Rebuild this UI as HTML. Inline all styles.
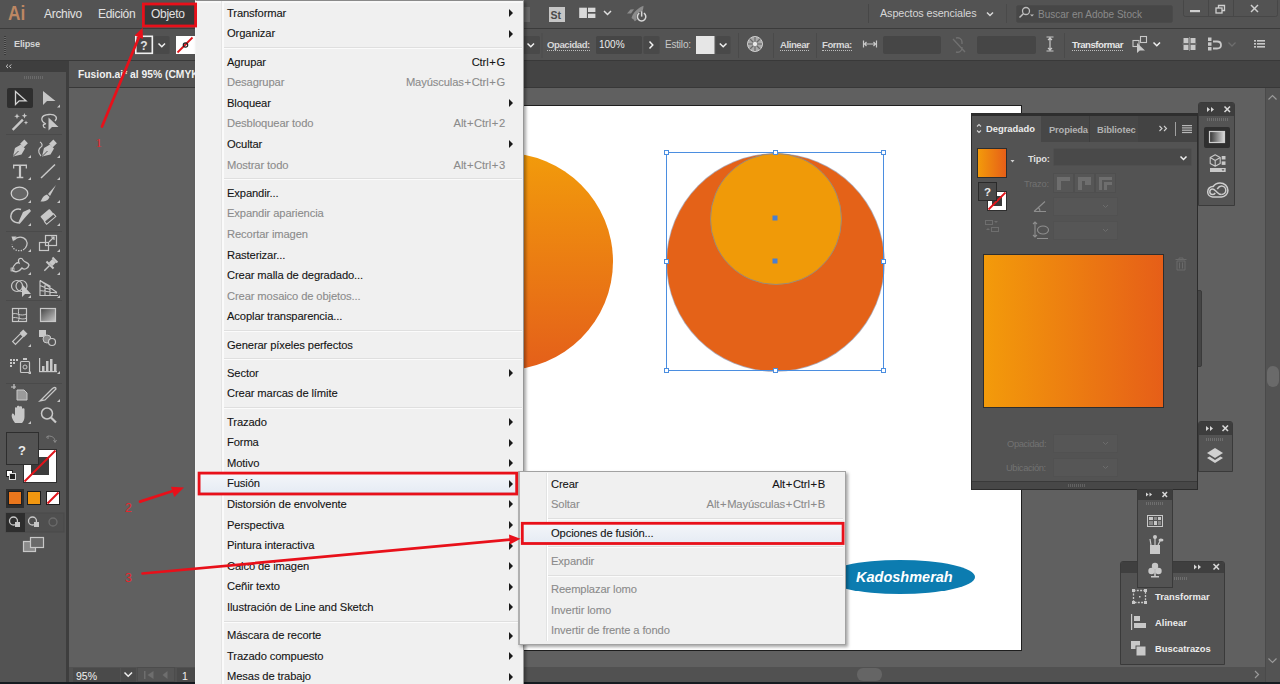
<!DOCTYPE html>
<html><head><meta charset="utf-8">
<style>
*{margin:0;padding:0;box-sizing:border-box}
html,body{width:1280px;height:684px;overflow:hidden;background:#606060;font-family:"Liberation Sans",sans-serif}
.a{position:absolute}
.t{position:absolute;white-space:nowrap;line-height:1}
svg{position:absolute;left:0;top:0;overflow:visible}
.fld{position:absolute;background:#464646;border-radius:2px}
.ul{border-bottom:1px dotted #bdbdbd;padding-bottom:1px}
.mi{position:absolute;left:227px;font-size:11px;color:#111;white-space:nowrap;line-height:1}
.arr{position:absolute;width:0;height:0;border-top:4px solid transparent;border-bottom:4px solid transparent;border-left:4.5px solid #1a1a1a}
.m{-webkit-text-stroke:0.1px currentColor;letter-spacing:-0.12px}
.sep{position:absolute;height:2px;border-top:1px solid #dfdfdf;border-bottom:1px solid #fbfbfb}
.ph{position:absolute;background:#3d3d3d}
</style></head><body>

<!-- canvas -->
<div class="a" style="left:69px;top:88px;width:1196px;height:579px;background:#606060"></div>
<!-- tab bar -->
<div class="a" style="left:66px;top:60px;width:1214px;height:28px;background:#444444;border-bottom:1px solid #383838"></div>
<div class="a" style="left:69px;top:61px;width:440px;height:26px;background:#535353"></div>
<div class="t" style="left:78px;top:70.28px;font-size:10.3px;color:#f0f0f0;font-weight:bold;">Fusion.ai* al 95% (CMYK/Vista previa)</div>


<!-- artboard -->
<div class="a" style="left:500px;top:105px;width:522px;height:546px;background:#fff;border:1px solid #1e1e1e"></div>

<!-- left circle gradient -->
<div class="a" style="left:395px;top:153px;width:218px;height:217px;border-radius:50%;background:linear-gradient(#f29b0b,#e45f1a)"></div>
<!-- right circle -->
<div class="a" style="left:667px;top:153.5px;width:217px;height:217px;border-radius:50%;background:#e46218;box-shadow:0 0 0 0.8px rgba(105,100,125,.55)"></div>
<div class="a" style="left:710px;top:153px;width:132px;height:132px;border-radius:50%;background:#f09a08;border:1px solid #9b8a78"></div>
<!-- selection box -->
<svg width="1280" height="684" viewBox="0 0 1280 684">
 <g fill="none" stroke="#4b8ee0" stroke-width="1">
  <rect x="666.5" y="152.5" width="217" height="218"/>
 </g>
 <g fill="#fff" stroke="#4b8ee0" stroke-width="1">
  <rect x="664.5" y="150.5" width="4" height="4"/><rect x="773.5" y="150.5" width="4" height="4"/><rect x="881.5" y="150.5" width="4" height="4"/>
  <rect x="664.5" y="259.5" width="4" height="4"/><rect x="881.5" y="259.5" width="4" height="4"/>
  <rect x="664.5" y="368.5" width="4" height="4"/><rect x="773.5" y="368.5" width="4" height="4"/><rect x="881.5" y="368.5" width="4" height="4"/>
 </g>
 <rect x="772.5" y="215.5" width="5" height="5" fill="#4a7fd0"/>
 <rect x="772.5" y="258.5" width="5" height="5" fill="#4a7fd0"/>
</svg>

<!-- Kadoshmerah -->
<div class="a" style="left:825px;top:560px;width:150px;height:34px;border-radius:50%;background:#0c7cb0"></div>
<div class="t" style="left:856px;top:569.73px;font-size:14.5px;color:#ffffff;font-weight:bold;font-style:italic;">Kadoshmerah</div>


<!-- menubar -->
<div class="a" style="left:0;top:0;width:1280px;height:29px;background:#535353;border-bottom:1px solid #3b3b3b"></div>
<div class="a" style="left:144px;top:3px;width:51px;height:23px;background:#383838"></div>
<svg width="1280" height="684" viewBox="0 0 1280 684">
 <rect x="524" y="7" width="6" height="15" fill="#686868"/>
 <rect x="549" y="7" width="16" height="15" fill="#c6c6c6"/>
 <text x="550.5" y="19" font-family="Liberation Sans" font-size="10.5" font-weight="bold" fill="#4a4a4a">St</text>
 <g fill="#dadada"><rect x="579.2" y="7.7" width="7.7" height="10.3"/><rect x="588" y="7.7" width="7.4" height="4.3"/><rect x="588" y="13.7" width="7.4" height="4.3"/></g>
 <polyline points="604,11 607.5,14.5 611,11" fill="none" stroke="#e0e0e0" stroke-width="1.5"/>
 <g fill="#8c8c8c"><path d="M631.5,18 C633,13 637,8.5 643.5,5.8 C643.5,11 640,16.5 635.5,21 Z"/><path d="M627,13.5 L630.5,9.5 L634,9.3 L631,13.5 Z"/><path d="M634,21.5 L634.5,17 L637,18 Z"/></g>
 <circle cx="641.6" cy="17" r="5.4" fill="#535353"/>
 <path d="M639.3,13.2 A4.2,4.2 0 1 0 643.9,13.2" fill="none" stroke="#d8d8d8" stroke-width="1.5"/>
 <rect x="640.9" y="11.3" width="1.5" height="5.3" fill="#d8d8d8"/>
 <rect x="868" y="4" width="1" height="19" fill="#474747"/>
 <polyline points="987,12.5 990,15.5 993,12.5" fill="none" stroke="#d8d8d8" stroke-width="1.5"/>
 <rect x="1006" y="4" width="1" height="19" fill="#4a4a4a"/>
 <rect x="1016.5" y="5.5" width="156" height="17" rx="2" fill="#474747" stroke="#4a4a4a"/>
 <circle cx="1026" cy="11" r="3.5" fill="none" stroke="#bdbdbd" stroke-width="1.3"/>
 <line x1="1023.3" y1="13.7" x2="1019.5" y2="17.5" stroke="#bdbdbd" stroke-width="1.5"/>
 <path d="M1030,14.5 h4 l-2,2 Z" fill="#bdbdbd"/>
 <rect x="1183.5" y="-1.5" width="94" height="18" rx="2" fill="none" stroke="#474747"/>
 <rect x="1208" y="0" width="1" height="16" fill="#474747"/>
 <rect x="1233" y="0" width="1" height="16" fill="#474747"/>
 <rect x="1190" y="10" width="10" height="2.2" fill="#cfcfcf"/>
 <g fill="none" stroke="#cfcfcf" stroke-width="1.3"><rect x="1216" y="8" width="6" height="5"/><path d="M1218.5,8 v-2.5 h6 v5 h-2.5"/></g>
 <g stroke="#cfcfcf" stroke-width="1.5"><line x1="1251" y1="5" x2="1258" y2="12"/><line x1="1258" y1="5" x2="1251" y2="12"/></g>
</svg>
<div class="t" style="left:7.5px;top:3.37px;font-size:20px;color:#bd8763;font-weight:bold;transform:scaleX(0.86);transform-origin:0 0;">Ai</div>
<div class="t" style="left:44px;top:8.44px;font-size:12px;color:#e2e2e2;letter-spacing:-0.3px;">Archivo</div>
<div class="t" style="left:98px;top:8.44px;font-size:12px;color:#e2e2e2;letter-spacing:-0.3px;">Edición</div>
<div class="t" style="left:151px;top:8.44px;font-size:12px;color:#e2e2e2;letter-spacing:-0.3px;">Objeto</div>
<div class="t" style="left:880px;top:8.06px;font-size:10.8px;color:#d6d6d6;letter-spacing:-0.1px;">Aspectos esenciales</div>
<div class="t" style="left:1038px;top:9.54px;font-size:10px;color:#8a8a8a;">Buscar en Adobe Stock</div>


<!-- control bar -->
<div class="a" style="left:0;top:29px;width:1280px;height:32px;background:#535353;border-bottom:1px solid #393939"></div>
<svg width="1280" height="684" viewBox="0 0 1280 684">
 <g fill="#3a3a3a"><rect x="4" y="36" width="2" height="19"/></g>
 <g fill="#6a6a6a"><rect x="4" y="37" width="2" height="1"/><rect x="4" y="39" width="2" height="1"/><rect x="4" y="41" width="2" height="1"/><rect x="4" y="43" width="2" height="1"/><rect x="4" y="45" width="2" height="1"/><rect x="4" y="47" width="2" height="1"/><rect x="4" y="49" width="2" height="1"/><rect x="4" y="51" width="2" height="1"/><rect x="4" y="53" width="2" height="1"/></g>
 <!-- fill ? -->
 <rect x="135.8" y="36.3" width="16.5" height="17" fill="#474747" stroke="#f0f0f0" stroke-width="1.6"/>
 <text x="140.2" y="50" font-family="Liberation Sans" font-size="12" font-weight="bold" fill="#e0e0e0">?</text>
 <rect x="154" y="36" width="15.5" height="18" rx="1.5" fill="#494949"/>
 <polyline points="158.5,43.5 161.8,46.8 165,43.5" fill="none" stroke="#f0f0f0" stroke-width="1.5"/>
 <rect x="176" y="36" width="19" height="18" fill="#fff"/>
 <line x1="177.5" y1="52.5" x2="192.5" y2="37.5" stroke="#e0141a" stroke-width="1.8"/>
 <circle cx="185.5" cy="45" r="2.2" fill="none" stroke="#222" stroke-width="1.2"/>
 <!-- dropdown near menu -->
 <rect x="520" y="36" width="20" height="18" rx="1.5" fill="#494949"/>
 <polyline points="527.5,43.5 530.8,46.8 534,43.5" fill="none" stroke="#f0f0f0" stroke-width="1.5"/>
 <rect x="541.5" y="33" width="1" height="25" fill="#4c4c4c"/>
 <rect x="596" y="36" width="46" height="18" rx="1.5" fill="#464646"/>
 <rect x="643.5" y="36" width="16" height="18" rx="1.5" fill="#494949"/>
 <polyline points="649.5,41.5 652.8,45 649.5,48.5" fill="none" stroke="#f0f0f0" stroke-width="1.5"/>
 <rect x="696" y="36" width="18.5" height="18" fill="#e6e6e6"/>
 <rect x="716" y="36" width="14.5" height="18" rx="1.5" fill="#494949"/>
 <polyline points="719.8,43.5 723.2,46.8 726.5,43.5" fill="none" stroke="#f0f0f0" stroke-width="1.5"/>
 <rect x="738" y="33" width="1" height="25" fill="#4a4a4a"/>
 <!-- globe -->
 <circle cx="755" cy="44" r="7.5" fill="#a8a8a8" stroke="#cfcfcf" stroke-width="1"/>
 <g stroke="#6a6a6a" stroke-width="1.2"><line x1="755" y1="37" x2="755" y2="51"/><line x1="748" y1="44" x2="762" y2="44"/><line x1="750" y1="39" x2="760" y2="49"/><line x1="760" y1="39" x2="750" y2="49"/></g>
 <circle cx="755" cy="44" r="2.2" fill="#e8e8e8"/>
 <rect x="773" y="33" width="1" height="25" fill="#4a4a4a"/>
 <rect x="816" y="33" width="1" height="25" fill="#4a4a4a"/>
 <!-- width icon -->
 <g stroke="#c8c8c8" stroke-width="1.2" fill="none"><path d="M863.5,40.5 v7 M876.5,40.5 v7 M864,44 h12 M866.5,42 l-2,2 l2,2 M873.5,42 l2,2 l-2,2"/></g>
 <rect x="883" y="36" width="58" height="18" rx="2" fill="#464646"/>
 <!-- link -->
 <g stroke="#707070" stroke-width="1.4" fill="none"><path d="M956,38 c3,-1 6,1 6,4 v2 M956,52 c3,1 6,-1 6,-4 v-1 M953,39 l12,13"/></g>
 <rect x="977" y="36" width="59" height="18" rx="2" fill="#464646"/>
 <!-- height icon -->
 <g stroke="#c8c8c8" stroke-width="1.2" fill="none"><path d="M1046.5,37 h7 M1046.5,51 h7 M1050,37.5 v13 M1048,40 l2,-2 l2,2 M1048,48 l2,2 l2,-2"/></g>
 <rect x="1064" y="33" width="1" height="25" fill="#4a4a4a"/>
 <!-- transform icon -->
 <g fill="none" stroke="#c8c8c8" stroke-width="1.1"><rect x="1133" y="40.5" width="6" height="6"/><rect x="1140.5" y="36.5" width="6" height="6"/></g>
 <path d="M1137,43 L1137,53 L1139.8,50.5 L1145,50.5 Z" fill="#c8c8c8"/>
 <polyline points="1153.5,42.5 1156.8,45.8 1160,42.5" fill="none" stroke="#f0f0f0" stroke-width="1.5"/>
 <!-- grid -->
 <g fill="#c8c8c8"><rect x="1183.5" y="38" width="5" height="5"/><rect x="1190.5" y="38" width="5" height="5"/><rect x="1183.5" y="45" width="5" height="5"/><rect x="1190.5" y="45" width="5" height="5"/></g>
 <g fill="#8a8a8a"><rect x="1189" y="37" width="1" height="14"/><rect x="1182.5" y="43.5" width="14" height="1"/></g>
 <!-- align -->
 <g fill="#c8c8c8"><rect x="1208" y="37.5" width="3.5" height="3.5"/><rect x="1208" y="42.3" width="3.5" height="3.5"/><rect x="1208" y="47" width="3.5" height="3.5"/></g>
 <path d="M1213,41.5 h4 c3,0 4,1.5 4,3.5 c0,2 -1,3.5 -4,3.5 h-4" fill="none" stroke="#c8c8c8" stroke-width="1.8"/>
 <polyline points="1228.5,42.5 1232,46 1235.5,42.5" fill="none" stroke="#6e6e6e" stroke-width="1.3"/>
 <!-- list -->
 <g fill="#c8c8c8"><rect x="1254" y="40" width="2" height="1.6"/><rect x="1257" y="40" width="8" height="1.6"/><rect x="1254" y="43" width="2" height="1.6"/><rect x="1257" y="43" width="8" height="1.6"/><rect x="1254" y="46" width="2" height="1.6"/><rect x="1257" y="46" width="8" height="1.6"/></g>
</svg>
<div class="t" style="left:14px;top:39.71px;font-size:9.2px;color:#d4d4d4;font-weight:bold;letter-spacing:-0.2px;">Elipse</div>
<div class="t ul" style="left:547px;top:39.87px;font-size:9.6px;color:#d8d8d8;font-weight:bold;letter-spacing:-0.45px;">Opacidad:</div>
<div class="t" style="left:599px;top:39.53px;font-size:10px;color:#ececec;">100%</div>
<div class="t" style="left:665px;top:39.53px;font-size:10px;color:#c8c8c8;letter-spacing:-0.2px;">Estilo:</div>
<div class="t ul" style="left:780px;top:39.87px;font-size:9.6px;color:#d8d8d8;font-weight:bold;letter-spacing:-0.45px;">Alinear</div>
<div class="t ul" style="left:822px;top:39.87px;font-size:9.6px;color:#d8d8d8;font-weight:bold;letter-spacing:-0.45px;">Forma:</div>
<div class="t ul" style="left:1072px;top:39.87px;font-size:9.6px;color:#e6e6e6;font-weight:bold;letter-spacing:-0.45px;">Transformar</div>


<!-- tools panel -->
<div class="a" style="left:0;top:61px;width:69px;height:623px;background:#3e3e3e"></div>
<div class="a" style="left:0;top:72px;width:66px;height:612px;background:#535353"></div>
<svg width="1280" height="684" viewBox="0 0 1280 684">
 <!-- header chevrons -->
 <g fill="none" stroke="#d0d0d0" stroke-width="1">
  <polyline points="8,64.5 6.2,66.3 8,68.1"/><polyline points="11.2,64.5 9.4,66.3 11.2,68.1"/>
 </g>
 <!-- grip -->
 <g fill="#6a6a6a"><rect x="24" y="76" width="19" height="3"/></g>
 <g fill="#535353"><rect x="25" y="76" width="1" height="3"/><rect x="27" y="76" width="1" height="3"/><rect x="29" y="76" width="1" height="3"/><rect x="31" y="76" width="1" height="3"/><rect x="33" y="76" width="1" height="3"/><rect x="35" y="76" width="1" height="3"/><rect x="37" y="76" width="1" height="3"/><rect x="39" y="76" width="1" height="3"/><rect x="41" y="76" width="1" height="3"/></g>
 <!-- separators -->
 <g fill="#4a4a4a"><rect x="6" y="134" width="56" height="1"/><rect x="6" y="231" width="56" height="1"/><rect x="6" y="300" width="56" height="1"/><rect x="6" y="383" width="56" height="1"/></g>
 <!-- selected bg -->
 <rect x="7" y="88" width="26" height="20" rx="2" fill="#2e2e2e"/>
 <g fill="none" stroke="#d4d4d4" stroke-width="1.3" stroke-linejoin="miter">
  <!-- selection arrow outline -->
  <path d="M15.5,91.5 L15.5,104.5 L19.2,100.8 L26,100.8 Z"/>
 </g>
 <g fill="#c6c6c6">
  <!-- direct selection -->
  <path d="M43,91 L43,105 L47,101 L55.5,101 Z"/>
  <!-- corner triangles -->
  <path d="M60,104.5 L60,107.5 L57,107.5 Z"/>
  <path d="M31,155 L31,158 L28,158 Z"/><path d="M60,155 L60,158 L57,158 Z"/>
  <path d="M31,177 L31,180 L28,180 Z"/><path d="M60,177 L60,180 L57,180 Z"/>
  <path d="M31,200 L31,203 L28,203 Z"/><path d="M60,200 L60,203 L57,203 Z"/>
  <path d="M31,223 L31,226 L28,226 Z"/><path d="M60,223 L60,226 L57,226 Z"/>
  <path d="M31,249 L31,252 L28,252 Z"/><path d="M60,249 L60,252 L57,252 Z"/>
  <path d="M31,272 L31,275 L28,275 Z"/><path d="M60,272 L60,275 L57,275 Z"/>
  <path d="M31,295 L31,298 L28,298 Z"/><path d="M60,295 L60,298 L57,298 Z"/>
  <path d="M31,344 L31,347 L28,347 Z"/>
  <path d="M31,371 L31,374 L28,374 Z"/><path d="M60,371 L60,374 L57,374 Z"/>
  <path d="M60,399 L60,402 L57,402 Z"/>
  <path d="M31,421 L31,424 L28,424 Z"/>
 </g>
 <!-- magic wand -->
 <g stroke="#c8c8c8" stroke-width="2.4" stroke-linecap="square"><line x1="13.5" y1="129" x2="22" y2="120.5"/></g>
 <g fill="#c8c8c8">
  <path d="M17,113.5 l0.8,2 l2,0.8 l-2,0.8 l-0.8,2 l-0.8,-2 l-2,-0.8 l2,-0.8 Z"/>
  <path d="M24.5,113 l0.8,2 l2,0.8 l-2,0.8 l-0.8,2 l-0.8,-2 l-2,-0.8 l2,-0.8 Z"/>
  <path d="M26,120.5 l0.6,1.5 l1.5,0.6 l-1.5,0.6 l-0.6,1.5 l-0.6,-1.5 l-1.5,-0.6 l1.5,-0.6 Z"/>
 </g>
 <!-- lasso -->
 <g fill="none" stroke="#c8c8c8" stroke-width="1.3">
  <path d="M46,124 C40,121 40,115 49,114.5 C56,114 58,118 55,121"/>
  <path d="M45.5,124 c-3,0 -3,3 0,4"/>
 </g>
 <path d="M48.5,117.5 L48.5,130.5 L52,127 L58.5,127 Z" fill="#c8c8c8"/>
 <!-- pen -->
 <g fill="#c8c8c8">
  <path d="M13,156.5 L15,148 L21,144.5 L25,148.5 L21.5,154.5 Z"/>
  <rect x="21.5" y="140.5" width="5" height="6" transform="rotate(45 24 143.5)"/>
  <path d="M42,156.5 L44,148 L50,144.5 L54,148.5 L50.5,154.5 Z"/>
  <rect x="50.5" y="140.5" width="5" height="6" transform="rotate(45 53 143.5)"/>
 </g>
 <g stroke="#535353" stroke-width="1"><line x1="13.5" y1="156" x2="18.5" y2="151"/><line x1="42.5" y1="156" x2="47.5" y2="151"/></g>
 <path d="M41,156 C37,152 39,148 41,147 C43,146 42,143 40,142" fill="none" stroke="#c8c8c8" stroke-width="1.2"/>
 <!-- type T -->
 <g fill="#c8c8c8">
  <path d="M13,164.5 h14 v4 h-1.3 v-2.5 h-4.6 v10.8 h2.2 v1.4 h-6.6 v-1.4 h2.2 v-10.8 h-4.6 v2.5 h-1.3 Z"/>
 </g>
 <!-- line -->
 <line x1="41" y1="178" x2="55" y2="164.5" stroke="#c8c8c8" stroke-width="1.5"/>
 <!-- ellipse -->
 <ellipse cx="19.5" cy="193.5" rx="8.3" ry="6.3" fill="#666" stroke="#cfcfcf" stroke-width="1.3"/>
 <!-- brush -->
 <g fill="#c8c8c8">
  <path d="M56,185 L48,194 L50,196 Z"/>
  <path d="M47,194.5 L49.5,197 C48,201 44,202 40.5,201.5 C42,200 42,196 47,194.5 Z"/>
 </g>
 <!-- shaper -->
 <g fill="none" stroke="#c8c8c8" stroke-width="1.4"><path d="M20,223 C13,223 10,219 11,215 C12,210 17,208 21,209.5"/></g>
 <path d="M23,212 L29.5,209 L31,211 L26,216.5 L20,223.5 L18.5,222 Z" fill="#c8c8c8" />
 <path d="M16,212 C13,214 14,219 17,220" fill="none" stroke="#888" stroke-width="0"/>
 <!-- eraser -->
 <g transform="rotate(-40 48 216.5)"><rect x="42" y="211.5" width="12" height="10" rx="1" fill="#c8c8c8"/><rect x="42" y="218" width="12" height="3.5" fill="#535353" stroke="#c8c8c8" stroke-width="1"/></g>
 <!-- rotate -->
 <g fill="none" stroke="#c8c8c8" stroke-width="1.3"><path d="M14,240 C17,236.5 23,236 26,240 C28,243 27,248 23,250" /></g>
 <g fill="none" stroke="#c8c8c8" stroke-width="1.3" stroke-dasharray="1.3 1.3"><path d="M22,250.5 C17,251.5 12,249 12,244.5"/></g>
 <path d="M11.5,236.5 L16.5,236.5 L13,241.5 Z" fill="#c8c8c8"/>
 <!-- scale -->
 <g fill="none" stroke="#c8c8c8" stroke-width="1.2"><rect x="39.5" y="242.5" width="9" height="8"/><rect x="45.5" y="235.5" width="11" height="10"/></g>
 <path d="M49,242 L54,237 M51,237 h3 v3" fill="none" stroke="#c8c8c8" stroke-width="1.2"/>
 <!-- warp -->
 <path d="M12,270 C14,264 17,262 19,263 C17,258 22,257 23,260 C25,263 28,262 29,265 C28,269 24,270 22,268 C19,272 15,273 12,270 Z" fill="none" stroke="#c8c8c8" stroke-width="1.3"/>
 <rect x="11" y="268" width="3" height="3" fill="none" stroke="#c8c8c8" stroke-width="0.8"/>
 <!-- pin -->
 <g fill="#c8c8c8" transform="rotate(45 50 265)"><rect x="46.5" y="257" width="7" height="2"/><rect x="47.5" y="259" width="5" height="5"/><rect x="45" y="264" width="10" height="2"/><rect x="49.3" y="266" width="1.4" height="7"/></g>
 <!-- shape builder -->
 <g fill="none" stroke="#c8c8c8" stroke-width="1.2"><circle cx="17" cy="286" r="5.5"/><circle cx="21.5" cy="286" r="5.5"/></g>
 <path d="M22,284 L22,297 L25,294 L31,294 Z" fill="#c8c8c8"/>
 <!-- perspective grid -->
 <g fill="none" stroke="#c8c8c8" stroke-width="1.1"><path d="M40,280.5 L40,295.5 L58,295.5 M40,280.5 L50,286 L50,295.5 M40,285.5 L50,289.5 M40,290.5 L57,293 M45,283 L45,295.5 M40,280.5 L57,292.5"/></g>
 <!-- mesh -->
 <rect x="12.5" y="308.5" width="14" height="13" fill="none" stroke="#c8c8c8" stroke-width="1.2"/>
 <path d="M12.5,314 C17,312 20,317 26.5,314 M19,308.5 C17,313 21,317 18,321.5 M12.5,318 C16,316 22,321 26.5,318" fill="none" stroke="#c8c8c8" stroke-width="1"/>
 <!-- gradient -->
 <defs><linearGradient id="tg" x1="0" y1="0" x2="1" y2="1"><stop offset="0" stop-color="#444"/><stop offset="1" stop-color="#c8c8c8"/></linearGradient></defs>
 <rect x="40.5" y="308.5" width="15" height="13" fill="url(#tg)" stroke="#c8c8c8" stroke-width="1.2"/>
 <!-- eyedropper -->
 <g transform="rotate(45 19 338)"><rect x="16" y="329" width="6" height="5" fill="#c8c8c8"/><rect x="17" y="334" width="4" height="11" fill="none" stroke="#c8c8c8" stroke-width="1.2"/></g>
 <!-- blend -->
 <rect x="39" y="330" width="7" height="7" fill="#c8c8c8"/><circle cx="47" cy="339" r="4" fill="#888" stroke="#c8c8c8" stroke-width="1"/><circle cx="52" cy="342" r="3.5" fill="#535353" stroke="#c8c8c8" stroke-width="1.2"/>
 <!-- symbol sprayer -->
 <g fill="#c8c8c8"><rect x="10" y="359" width="2" height="2"/><rect x="13" y="359" width="2" height="2"/><rect x="16" y="359" width="2" height="2"/><rect x="10" y="362" width="2" height="2"/><rect x="13" y="362" width="2" height="2"/><rect x="10" y="365" width="2" height="2"/><rect x="23" y="358" width="4" height="2"/></g>
 <rect x="20.5" y="361.5" width="9" height="11" rx="1" fill="none" stroke="#c8c8c8" stroke-width="1.2"/><circle cx="25" cy="367" r="2" fill="none" stroke="#c8c8c8" stroke-width="1"/>
 <!-- graph -->
 <g fill="#c8c8c8"><rect x="39" y="358" width="1.2" height="14"/><rect x="39" y="371" width="18" height="1.2"/><rect x="42" y="366" width="2.5" height="5"/><rect x="46" y="361" width="2.5" height="10"/><rect x="50" y="359" width="2.5" height="12"/><rect x="54" y="364" width="2.5" height="7"/></g>
 <!-- artboard -->
 <g fill="none" stroke="#c8c8c8" stroke-width="1.2"><path d="M14,384 v5 M11,387 h5"/></g>
 <path d="M17,390 h7 l3,3 v7 h-10 Z" fill="#9a9a9a" stroke="#c8c8c8" stroke-width="1"/>
 <!-- knife/slice -->
 <path d="M40,401 L52,389 C54,387 56,387 56,389 L45,400 Z" fill="none" stroke="#c8c8c8" stroke-width="1.3"/>
 <!-- hand -->
 <path d="M15,423 C12,419 11,416 12,414 C13,413 14,414 15,416 L15,408 C15,407 17,407 17,408 L17,414 L17,406.5 C17,405.5 19.5,405.5 19.5,406.5 L19.5,414 L19.5,407 C19.5,406 22,406 22,407 L22,414.5 L22,409 C22,408 24.5,408 24.5,409 L24.5,417 C24.5,420 23,422 22,423 Z" fill="#c8c8c8"/>
 <!-- zoom -->
 <circle cx="47" cy="413.5" r="5.5" fill="none" stroke="#c8c8c8" stroke-width="1.5"/><line x1="51" y1="417.5" x2="56" y2="422.5" stroke="#c8c8c8" stroke-width="2.2"/>
 <!-- fill/stroke -->
 <rect x="23.5" y="449.5" width="33" height="33" fill="#fff" stroke="#2f2f2f" stroke-width="1"/>
 <rect x="31" y="457" width="18" height="18" fill="#3c3c3c"/>
 <rect x="35" y="461" width="10" height="10" fill="#fff" opacity="0"/>
 <line x1="24.5" y1="481.5" x2="55.5" y2="450.5" stroke="#e0141a" stroke-width="2"/>
 <rect x="6.5" y="432.5" width="32" height="32" fill="#535353" stroke="#2e2e2e" stroke-width="1"/>
 <text x="18" y="454.5" font-family="Liberation Sans" font-size="13" font-weight="bold" fill="#ececec">?</text>
 <!-- swap -->
 <path d="M48,436 C53,436 55,438 55,442 M53.5,440 l1.5,2.5 l1.5,-2.5 M46,437.5 l2,-1.5 l0,3" fill="none" stroke="#8a8a8a" stroke-width="1"/>
 <!-- default -->
 <rect x="6.5" y="470.5" width="6" height="6" fill="#fff" stroke="#222" stroke-width="1"/><rect x="9.5" y="473.5" width="6" height="6" fill="#222" stroke="#ddd" stroke-width="1"/>
 <!-- color mode buttons -->
 <rect x="6" y="489" width="18" height="19" fill="#2e2e2e"/>
 <rect x="8.5" y="491.5" width="13" height="13" fill="#e9761c" stroke="#1e1e1e" stroke-width="1"/>
 <rect x="27.5" y="491.5" width="13" height="13" fill="#f29710" stroke="#1e1e1e" stroke-width="1"/>
 <rect x="46.5" y="491.5" width="13" height="13" fill="#fff" stroke="#1e1e1e" stroke-width="1"/>
 <line x1="47.5" y1="503.5" x2="58.5" y2="492.5" stroke="#e0141a" stroke-width="2"/>
 <!-- draw modes -->
 <rect x="6" y="513" width="58" height="19" fill="#4f4f4f" stroke="#4a4a4a"/>
 <rect x="6" y="513" width="19" height="19" fill="#2e2e2e"/>
 <g fill="none" stroke="#c8c8c8" stroke-width="1.3"><circle cx="13.5" cy="521" r="4"/><circle cx="32.5" cy="521" r="4"/></g>
 <g fill="#c8c8c8"><rect x="15" y="522" width="5" height="5"/><rect x="34" y="522" width="5" height="5"/></g>
 <circle cx="53" cy="522" r="4" fill="none" stroke="#6c6c6c" stroke-width="1.3"/>
 <!-- screen mode -->
 <rect x="23.5" y="541.5" width="12" height="10" fill="#8a8a8a" stroke="#c8c8c8" stroke-width="1.2"/>
 <rect x="30.5" y="537.5" width="13" height="10" fill="#6a6a6a" stroke="#c8c8c8" stroke-width="1.2"/>
</svg>


<!-- status bar -->
<div class="a" style="left:69px;top:667px;width:1196px;height:15px;background:#515151"></div>
<div class="a" style="left:0px;top:682px;width:1280px;height:2px;background:#151b20"></div>
<div class="a" style="left:73px;top:668px;width:47px;height:14px;background:#4a4a4a"></div>
<div class="a" style="left:121px;top:668px;width:15px;height:14px;background:#4a4a4a"></div>
<div class="a" style="left:137px;top:667px;width:38px;height:15px;background:#555;border:1px solid #4c4c4c"></div>
<div class="a" style="left:177px;top:668px;width:18px;height:14px;background:#4a4a4a"></div>
<div class="t" style="left:76px;top:671.11px;font-size:10.5px;color:#f0f0f0;">95%</div>
<div class="t" style="left:182px;top:671.11px;font-size:10.5px;color:#f0f0f0;">1</div>


<!-- right scrollbar -->
<div class="a" style="left:1265px;top:88px;width:15px;height:594px;background:#535353;border-left:1px solid #4a4a4a"></div>
<svg width="1280" height="684" viewBox="0 0 1280 684">
 <polyline points="1268.5,99.5 1272.5,95.5 1276.5,99.5" fill="none" stroke="#9a9a9a" stroke-width="1.2"/>
 <rect x="1267" y="366" width="12" height="21" rx="6" fill="#6a6a6a"/>
 <polyline points="1268.5,658.5 1272.5,662.5 1276.5,658.5" fill="none" stroke="#9a9a9a" stroke-width="1.2"/>
 <rect x="857" y="668" width="25" height="13" rx="6" fill="#656565"/>
 <polyline points="1255,671 1258.5,674.5 1255,678" fill="none" stroke="#9a9a9a" stroke-width="1.2"/>
 <polyline points="124.5,672.5 128.2,676.2 132,672.5" fill="none" stroke="#f0f0f0" stroke-width="1.5"/>
 <g fill="#6e6e6e"><rect x="144" y="671" width="1.5" height="8"/><path d="M153.5,671 v8 l-6,-4 Z"/><path d="M167.5,671 v8 l-5,-4 Z"/></g>
</svg>


<!-- dark edge behind -->
<div class="a" style="left:1197px;top:290px;width:5px;height:77px;background:#454545;border:1px solid #3a3a3a;border-radius:0 2px 2px 0"></div>
<!-- Degradado panel -->
<div class="a" style="left:971px;top:113px;width:227px;height:377px;background:#535353;border:1px solid #2c2c2c;border-top:3px solid #2e2e2e"></div>
<div class="a" style="left:972px;top:116px;width:225px;height:26px;background:#434343"></div>
<div class="a" style="left:1041px;top:116px;width:97px;height:26px;background:#474747"></div>
<div class="a" style="left:1089px;top:116px;width:1px;height:26px;background:#3e3e3e"></div>
<div class="a" style="left:972px;top:116px;width:69px;height:26px;background:#535353"></div>
<div class="t" style="left:986px;top:124.4px;font-size:9.4px;font-weight:bold;color:#ececec">Degradado</div>
<div class="t" style="left:1049px;top:124.6px;font-size:9.4px;font-weight:bold;color:#b2b2b2;letter-spacing:-0.15px">Propieda</div>
<div class="t" style="left:1097px;top:124.6px;font-size:9.4px;font-weight:bold;color:#b2b2b2;letter-spacing:-0.1px">Bibliotec</div>
<svg width="1280" height="684" viewBox="0 0 1280 684">
 <g fill="none" stroke="#d0d0d0" stroke-width="1.1">
  <polyline points="977,126.5 979,124.5 981,126.5"/><polyline points="977,130.5 979,132.5 981,130.5"/>
  <polyline points="1159.5,126 1162,128.5 1159.5,131"/><polyline points="1164,126 1166.5,128.5 1164,131"/>
 </g>
 <rect x="1175" y="122" width="1" height="14" fill="#a0a0a0"/>
 <g fill="#b8b8b8"><rect x="1182" y="125" width="10" height="1.2"/><rect x="1182" y="127.3" width="10" height="1.2"/><rect x="1182" y="129.6" width="10" height="1.2"/><rect x="1182" y="131.9" width="10" height="1.2"/></g>
 <defs>
  <linearGradient id="og" x1="0" y1="0" x2="1" y2="0"><stop offset="0" stop-color="#f39b0a"/><stop offset="1" stop-color="#e65e18"/></linearGradient>
 </defs>
 <!-- swatch -->
 <rect x="977.5" y="148.5" width="29" height="29" fill="url(#og)" stroke="#2e2e2e" stroke-width="1"/>
 <path d="M1010.5,160 h4 l-2,2.5 Z" fill="#d0d0d0"/>
 <!-- stroke swatch -->
 <rect x="987.5" y="191.5" width="19" height="19" fill="#fff" stroke="#2e2e2e"/>
 <rect x="992" y="196" width="10" height="10" fill="#3a3a3a"/>
 <line x1="988.5" y1="209.5" x2="1005.5" y2="192.5" stroke="#e0141a" stroke-width="1.8"/>
 <rect x="978.5" y="182.5" width="18" height="18" fill="#4a4a4a" stroke="#2a2a2a"/>
 <text x="984" y="196" font-family="Liberation Sans" font-size="11.5" font-weight="bold" fill="#e8e8e8">?</text>
 <!-- reverse icon -->
 <g fill="none" stroke="#6e6e6e" stroke-width="1"><rect x="985.5" y="220.5" width="7" height="4"/><rect x="991.5" y="227.5" width="7" height="4"/></g>
 <g fill="#6e6e6e"><path d="M994,221 h4 l-2,2 Z"/><path d="M986,230 h4 l-2,-2 Z"/></g>
 <!-- fields -->
 <rect x="1053.5" y="148.5" width="138" height="17" rx="1.5" fill="#494949" stroke="#4f4f4f"/>
 <polyline points="1180.5,156.5 1183.5,159.5 1186.5,156.5" fill="none" stroke="#f0f0f0" stroke-width="1.5"/>
 <g fill="#565656" stroke="#4f4f4f"><rect x="1053.5" y="173.5" width="20" height="19"/><rect x="1074.5" y="173.5" width="20" height="19"/><rect x="1095.5" y="173.5" width="20" height="19"/></g>
 <g fill="#6e6e6e"><path d="M1057,190 v-13 h13 v4 h-9 v9 Z"/><path d="M1078,190 v-13 h13 v8 h-6 v-4 h-3 v9 Z"/><path d="M1099,190 v-13 h13 v3 h-10 v10 Z M1104,190 v-8 h8 v3 h-5 v5 Z"/></g>
 <g fill="#565656" stroke="#515151"><rect x="1053.5" y="197.5" width="64" height="18" rx="1"/><rect x="1053.5" y="221.5" width="64" height="18" rx="1"/></g>
 <g fill="none" stroke="#6c6c6c" stroke-width="1"><polyline points="1103,205 1105.5,207.5 1108,205"/><polyline points="1103,229 1105.5,231.5 1108,229"/></g>
 <g fill="none" stroke="#8e8e8e" stroke-width="1.1">
  <path d="M1034,211.5 h12 M1034,211.5 L1045,201.5 M1040,211.5 c0,-2 -1,-3.5 -2,-4.5"/>
  <ellipse cx="1043" cy="230" rx="5.5" ry="4"/><path d="M1035,222 v15 M1033,224 l2,-2 l2,2 M1033,235 l2,2 l2,-2 M1037,238.5 h11"/>
 </g>
 <!-- trash -->
 <g fill="none" stroke="#6a6a6a" stroke-width="1"><path d="M1175.5,259.5 h11 M1179,259.5 v-1.5 h4 v1.5 M1177,261 h8 v9 h-8 Z M1179.5,262.5 v6 M1182.5,262.5 v6"/></g>
 <!-- gradient box -->
 <rect x="983.5" y="254.5" width="180" height="153" fill="url(#og)" stroke="#2e2e2e" stroke-width="1"/>
 <!-- opacity fields -->
 <g fill="#565656" stroke="#515151"><rect x="1053.5" y="434.5" width="64" height="18" rx="1"/><rect x="1053.5" y="458.5" width="64" height="18" rx="1"/></g>
 <g fill="none" stroke="#6c6c6c" stroke-width="1"><polyline points="1103,442 1105.5,444.5 1108,442"/><polyline points="1103,466 1105.5,468.5 1108,466"/></g>
 <!-- bottom bar -->
 <rect x="972" y="482" width="225" height="7" fill="#474747"/>
 <rect x="972" y="481" width="225" height="1" fill="#3a3a3a"/>
 <line x1="1068" y1="485.5" x2="1085" y2="485.5" stroke="#626262" stroke-width="3" stroke-dasharray="1 1"/>
</svg>
<div class="t" style="left:1028px;top:153.5px;font-size:9.4px;font-weight:bold;color:#dedede;letter-spacing:-0.2px">Tipo:</div>
<div class="t" style="left:1024px;top:178.8px;font-size:9.4px;color:#717171;letter-spacing:-0.2px">Trazo:</div>
<div class="t" style="left:1007px;top:439px;font-size:9.4px;color:#727272;letter-spacing:-0.4px">Opacidad:</div>
<div class="t" style="left:1006px;top:463px;font-size:9.4px;color:#727272;letter-spacing:-0.4px">Ubicación:</div>

<!-- small dock panel 1 -->
<div class="a" style="left:1198px;top:102px;width:37px;height:104px;background:#535353;border:1px solid #3a3a3a;border-radius:3px 3px 0 0"></div>
<div class="a" style="left:1199px;top:103px;width:35px;height:13px;background:#3d3d3d;border-radius:2px 2px 0 0"></div>
<svg width="1280" height="684" viewBox="0 0 1280 684">
 <g fill="#d8d8d8"><path d="M1207,107 l3,2.5 l-3,2.5 Z"/><path d="M1211,107 l3,2.5 l-3,2.5 Z"/></g>
 <g stroke="#d8d8d8" stroke-width="1.6"><line x1="1224.5" y1="106.5" x2="1230" y2="112"/><line x1="1230" y1="106.5" x2="1224.5" y2="112"/></g>
 <line x1="1207" y1="119.5" x2="1228" y2="119.5" stroke="#6e6e6e" stroke-width="3" stroke-dasharray="1 1"/>
 <rect x="1204" y="127" width="26" height="21" rx="2" fill="#2f2f2f"/>
 <defs><linearGradient id="gg" x1="0" y1="0" x2="1" y2="0"><stop offset="0" stop-color="#333"/><stop offset="1" stop-color="#ddd"/></linearGradient></defs>
 <rect x="1209.5" y="131.5" width="15" height="11" fill="url(#gg)" stroke="#d0d0d0" stroke-width="1.2"/>
 <g fill="none" stroke="#c8c8c8" stroke-width="1.1" stroke-linejoin="round"><path d="M1215.2,154.8 L1220.2,157.6 L1220.2,163.4 L1215.2,166.2 L1210.2,163.4 L1210.2,157.6 Z M1210.2,157.6 L1215.2,160.5 L1220.2,157.6 M1215.2,160.5 L1215.2,166.2"/></g>
 <g fill="#c8c8c8"><rect x="1221.7" y="156" width="3.8" height="3.5"/><rect x="1221.7" y="161.4" width="3.8" height="3.5"/><rect x="1210" y="168" width="15.7" height="4"/></g>
 <path d="M1221.5,169.2 h3 l-1.5,1.8 Z" fill="#535353"/>
 <g fill="none" stroke="#cdcdcd" stroke-width="1.5"><path d="M1212.5,196.9 C1209.5,196.9 1207.7,194.5 1207.7,191.8 C1207.7,188.5 1210.2,186.3 1213.2,186.5 C1214.7,184.2 1217.2,182.9 1220,182.9 C1224.5,182.9 1227.9,186.3 1227.9,190.4 C1227.9,194 1225,196.9 1221.5,196.9 Z"/><path d="M1221.3,194.5 c-2.5,0 -4,-2 -5.5,-3.5 c-1.2,-1.2 -2.2,-2 -3.3,-2 c-1.6,0 -2.7,1.3 -2.7,2.8 c0,1.5 1.1,2.7 2.7,2.7 c1.1,0 2,-0.6 2.8,-1.4 M1217.2,189 c1,-1.5 2.5,-3 4.3,-3 c2.4,0 4.3,2 4.3,4.3 c0,2.3 -1.9,4.2 -4.3,4.2"/></g>
</svg>

<!-- layers panel -->
<div class="a" style="left:1198px;top:421px;width:35px;height:51px;background:#535353;border:1px solid #3a3a3a;border-radius:3px 3px 0 0"></div>
<div class="a" style="left:1199px;top:422px;width:33px;height:13px;background:#3d3d3d;border-radius:2px 2px 0 0"></div>
<svg width="1280" height="684" viewBox="0 0 1280 684">
 <g fill="#d8d8d8"><path d="M1206,426 l3,2.5 l-3,2.5 Z"/><path d="M1210,426 l3,2.5 l-3,2.5 Z"/></g>
 <g stroke="#d8d8d8" stroke-width="1.6"><line x1="1222.5" y1="425.5" x2="1228" y2="431"/><line x1="1228" y1="425.5" x2="1222.5" y2="431"/></g>
 <line x1="1206" y1="439.5" x2="1224" y2="439.5" stroke="#6e6e6e" stroke-width="3" stroke-dasharray="1 1"/>
 <g fill="#d0d0d0"><path d="M1207,453 l8,-5 l8,5 l-8,5 Z"/><path d="M1207,458 l2.5,-1.5 l5.5,3.5 l5.5,-3.5 l2.5,1.5 l-8,5 Z"/></g>
</svg>

<!-- transform panel -->
<div class="a" style="left:1120px;top:561px;width:105px;height:104px;background:#535353;border:1px solid #3a3a3a;border-radius:3px 3px 0 0"></div>
<div class="a" style="left:1121px;top:562px;width:103px;height:11px;background:#3f3f3f;border-radius:2px 2px 0 0"></div>
<div class="t" style="left:1155px;top:591.5px;font-size:9.4px;font-weight:bold;color:#ececec">Transformar</div>
<div class="t" style="left:1155px;top:617.6px;font-size:9.4px;font-weight:bold;color:#ececec">Alinear</div>
<div class="t" style="left:1155px;top:643.6px;font-size:9.4px;font-weight:bold;color:#ececec">Buscatrazos</div>
<svg width="1280" height="684" viewBox="0 0 1280 684">
 <g fill="#d8d8d8"><path d="M1194,564.5 l3,2.5 l-3,2.5 Z"/><path d="M1198,564.5 l3,2.5 l-3,2.5 Z"/></g>
 <g stroke="#d8d8d8" stroke-width="1.6"><line x1="1213.5" y1="564" x2="1219" y2="569.5"/><line x1="1219" y1="564" x2="1213.5" y2="569.5"/></g>
 <line x1="1172" y1="578.5" x2="1187" y2="578.5" stroke="#6e6e6e" stroke-width="3" stroke-dasharray="1 1"/>
 <g fill="none" stroke="#c8c8c8" stroke-width="1.3" stroke-dasharray="2 1.3"><rect x="1133.5" y="590.5" width="12" height="12"/></g>
 <g fill="#c8c8c8"><rect x="1132" y="589" width="3" height="3"/><rect x="1144" y="589" width="3" height="3"/><rect x="1132" y="601" width="3" height="3"/><rect x="1144" y="601" width="3" height="3"/><rect x="1139" y="596" width="1.5" height="1.5"/></g>
 <g fill="#c8c8c8"><rect x="1131" y="614" width="1.2" height="16"/><rect x="1134" y="616" width="6" height="5"/><rect x="1134" y="623" width="12" height="5"/></g>
 <g fill="#c8c8c8"><rect x="1131" y="641" width="9" height="8"/><rect x="1136" y="646" width="10" height="10" stroke="#535353" stroke-width="1"/></g>
</svg>

<!-- swatches small panel -->
<div class="a" style="left:1137px;top:489px;width:36px;height:99px;background:#535353;border:1px solid #3a3a3a"></div>
<div class="a" style="left:1138px;top:490px;width:34px;height:10px;background:#3d3d3d"></div>
<svg width="1280" height="684" viewBox="0 0 1280 684">
 <g fill="#d8d8d8"><path d="M1146,492.5 l2.6,2 l-2.6,2 Z"/><path d="M1149.5,492.5 l2.6,2 l-2.6,2 Z"/></g>
 <g stroke="#d8d8d8" stroke-width="1.5"><line x1="1162.5" y1="492" x2="1167" y2="497"/><line x1="1167" y1="492" x2="1162.5" y2="497"/></g>
 <line x1="1146" y1="503.5" x2="1163" y2="503.5" stroke="#6e6e6e" stroke-width="3" stroke-dasharray="1 1"/>
 <rect x="1147.5" y="515.5" width="15" height="11" fill="none" stroke="#c8c8c8" stroke-width="1"/>
 <g fill="#c8c8c8"><rect x="1149" y="517" width="4" height="3"/><rect x="1154" y="517" width="3" height="3" fill="#888"/><rect x="1158" y="517" width="3" height="3"/><rect x="1149" y="521" width="4" height="4" fill="#888"/><rect x="1154" y="521" width="3" height="4"/><rect x="1158" y="521" width="3" height="4" fill="#888"/></g>
 <g fill="#c8c8c8"><rect x="1150" y="545" width="10" height="9"/><path d="M1151,545 l-1,-6 M1155,545 v-8 M1158,545 l3,-6" stroke="#c8c8c8" stroke-width="1.2"/><circle cx="1155" cy="537" r="2"/><ellipse cx="1161" cy="540" rx="2.5" ry="1.5"/></g>
 <g fill="#c8c8c8"><circle cx="1155" cy="566" r="3.2"/><circle cx="1151.5" cy="571" r="3.2"/><circle cx="1158.5" cy="571" r="3.2"/><rect x="1154.2" y="569" width="1.6" height="7"/><rect x="1151" y="576" width="8" height="1.5"/></g>
</svg>


<!-- menu -->
<div class="a" style="left:195px;top:0px;width:329px;height:684px;background:#f0f0f0;border-left:1px solid #f4f4f4;border-top:1px solid #8a8a8a;border-right:1px solid #979797;box-shadow:2px 2px 3px rgba(0,0,0,.35)"></div>
<div class="a" style="left:196px;top:1px;width:327px;height:2px;background:#f8f8f8"></div>
<div class="a" style="left:221px;top:1px;width:3px;height:683px;border-left:1px solid #e4e4e4;border-right:2px solid #fafafa"></div>
<div class="t m" style="left:227px;top:7.72px;font-size:11.2px;color:#141414;">Transformar</div>
<div class="arr" style="left:509px;top:9.2px"></div>
<div class="t m" style="left:227px;top:28.32px;font-size:11.2px;color:#141414;">Organizar</div>
<div class="arr" style="left:509px;top:29.8px"></div>
<div class="sep" style="left:224px;top:47.2px;width:298px"></div>
<div class="t m" style="left:227px;top:56.52px;font-size:11.2px;color:#141414;">Agrupar</div>
<div class="t m" style="right:775px;top:56.52px;font-size:11.2px;color:#141414;">Ctrl<span style="margin:0 0.73px">+</span>G</div>
<div class="t m" style="left:227px;top:77.12px;font-size:11.2px;color:#8b8b8b;">Desagrupar</div>
<div class="t m" style="right:775px;top:77.12px;font-size:11.2px;color:#8b8b8b;">Mayúsculas<span style="margin:0 0.73px">+</span>Ctrl<span style="margin:0 0.73px">+</span>G</div>
<div class="t m" style="left:227px;top:97.72px;font-size:11.2px;color:#141414;">Bloquear</div>
<div class="arr" style="left:509px;top:99.2px"></div>
<div class="t m" style="left:227px;top:118.32px;font-size:11.2px;color:#8b8b8b;">Desbloquear todo</div>
<div class="t m" style="right:775px;top:118.32px;font-size:11.2px;color:#8b8b8b;">Alt<span style="margin:0 0.73px">+</span>Ctrl<span style="margin:0 0.73px">+</span>2</div>
<div class="t m" style="left:227px;top:138.92px;font-size:11.2px;color:#141414;">Ocultar</div>
<div class="arr" style="left:509px;top:140.4px"></div>
<div class="t m" style="left:227px;top:159.52px;font-size:11.2px;color:#8b8b8b;">Mostrar todo</div>
<div class="t m" style="right:775px;top:159.52px;font-size:11.2px;color:#8b8b8b;">Alt<span style="margin:0 0.73px">+</span>Ctrl<span style="margin:0 0.73px">+</span>3</div>
<div class="sep" style="left:224px;top:178.4px;width:298px"></div>
<div class="t m" style="left:227px;top:187.72px;font-size:11.2px;color:#141414;">Expandir...</div>
<div class="t m" style="left:227px;top:208.32px;font-size:11.2px;color:#8b8b8b;">Expandir apariencia</div>
<div class="t m" style="left:227px;top:228.92px;font-size:11.2px;color:#8b8b8b;">Recortar imagen</div>
<div class="t m" style="left:227px;top:249.52px;font-size:11.2px;color:#141414;">Rasterizar...</div>
<div class="t m" style="left:227px;top:270.12px;font-size:11.2px;color:#141414;">Crear malla de degradado...</div>
<div class="t m" style="left:227px;top:290.72px;font-size:11.2px;color:#8b8b8b;">Crear mosaico de objetos...</div>
<div class="t m" style="left:227px;top:311.32px;font-size:11.2px;color:#141414;">Acoplar transparencia...</div>
<div class="sep" style="left:224px;top:330.2px;width:298px"></div>
<div class="t m" style="left:227px;top:339.52px;font-size:11.2px;color:#141414;">Generar píxeles perfectos</div>
<div class="sep" style="left:224px;top:358.4px;width:298px"></div>
<div class="t m" style="left:227px;top:367.72px;font-size:11.2px;color:#141414;">Sector</div>
<div class="arr" style="left:509px;top:369.2px"></div>
<div class="t m" style="left:227px;top:388.32px;font-size:11.2px;color:#141414;">Crear marcas de límite</div>
<div class="sep" style="left:224px;top:407.2px;width:298px"></div>
<div class="t m" style="left:227px;top:416.52px;font-size:11.2px;color:#141414;">Trazado</div>
<div class="arr" style="left:509px;top:418.0px"></div>
<div class="t m" style="left:227px;top:437.12px;font-size:11.2px;color:#141414;">Forma</div>
<div class="arr" style="left:509px;top:438.6px"></div>
<div class="t m" style="left:227px;top:457.72px;font-size:11.2px;color:#141414;">Motivo</div>
<div class="arr" style="left:509px;top:459.2px"></div>
<div class="a" style="left:199px;top:472.3px;width:317px;height:21px;background:linear-gradient(#f4f6fa,#e6ecf4);border:1px solid #d3dcea;border-radius:2px"></div>
<div class="t m" style="left:227px;top:478.32px;font-size:11.2px;color:#141414;">Fusión</div>
<div class="arr" style="left:509px;top:479.8px"></div>
<div class="t m" style="left:227px;top:498.92px;font-size:11.2px;color:#141414;">Distorsión de envolvente</div>
<div class="arr" style="left:509px;top:500.4px"></div>
<div class="t m" style="left:227px;top:519.52px;font-size:11.2px;color:#141414;">Perspectiva</div>
<div class="arr" style="left:509px;top:521.0px"></div>
<div class="t m" style="left:227px;top:540.12px;font-size:11.2px;color:#141414;">Pintura interactiva</div>
<div class="arr" style="left:509px;top:541.6px"></div>
<div class="t m" style="left:227px;top:560.72px;font-size:11.2px;color:#141414;">Calco de imagen</div>
<div class="arr" style="left:509px;top:562.2px"></div>
<div class="t m" style="left:227px;top:581.32px;font-size:11.2px;color:#141414;">Ceñir texto</div>
<div class="arr" style="left:509px;top:582.8px"></div>
<div class="t m" style="left:227px;top:601.92px;font-size:11.2px;color:#141414;">Ilustración de Line and Sketch</div>
<div class="arr" style="left:509px;top:603.4px"></div>
<div class="sep" style="left:224px;top:620.8px;width:298px"></div>
<div class="t m" style="left:227px;top:630.12px;font-size:11.2px;color:#141414;">Máscara de recorte</div>
<div class="arr" style="left:509px;top:631.6px"></div>
<div class="t m" style="left:227px;top:650.72px;font-size:11.2px;color:#141414;">Trazado compuesto</div>
<div class="arr" style="left:509px;top:652.2px"></div>
<div class="t m" style="left:227px;top:671.32px;font-size:11.2px;color:#141414;">Mesas de trabajo</div>
<div class="arr" style="left:509px;top:672.8px"></div>


<!-- submenu -->
<div class="a" style="left:518px;top:471px;width:328px;height:174px;background:#f0f0f0;border:1px solid #a2a2a2;border-left:2px solid #b0b0b0;box-shadow:2px 2px 3px rgba(0,0,0,.35)"></div>
<div class="a" style="left:546px;top:473px;width:2px;height:168px;border-left:1px solid #e2e3e3;border-right:1px solid #fff"></div>
<div class="t m" style="left:551px;top:478.72px;font-size:11.2px;color:#141414;">Crear</div>
<div class="t m" style="right:455px;top:478.72px;font-size:11.2px;color:#141414;">Alt<span style="margin:0 0.73px">+</span>Ctrl<span style="margin:0 0.73px">+</span>B</div>
<div class="t m" style="left:551px;top:499.32px;font-size:11.2px;color:#8b8b8b;">Soltar</div>
<div class="t m" style="right:455px;top:499.32px;font-size:11.2px;color:#8b8b8b;">Alt<span style="margin:0 0.73px">+</span>Mayúsculas<span style="margin:0 0.73px">+</span>Ctrl<span style="margin:0 0.73px">+</span>B</div>
<div class="sep" style="left:548px;top:518.2px;width:295px"></div>
<div class="a" style="left:522px;top:521.5px;width:321px;height:21px;background:linear-gradient(#f4f6fa,#e6ecf4);border:1px solid #d3dcea;border-radius:2px"></div>
<div class="t m" style="left:551px;top:527.52px;font-size:11.2px;color:#141414;">Opciones de fusión...</div>
<div class="sep" style="left:548px;top:546.4px;width:295px"></div>
<div class="t m" style="left:551px;top:555.72px;font-size:11.2px;color:#8b8b8b;">Expandir</div>
<div class="sep" style="left:548px;top:574.6px;width:295px"></div>
<div class="t m" style="left:551px;top:583.92px;font-size:11.2px;color:#8b8b8b;">Reemplazar lomo</div>
<div class="t m" style="left:551px;top:604.52px;font-size:11.2px;color:#8b8b8b;">Invertir lomo</div>
<div class="t m" style="left:551px;top:625.12px;font-size:11.2px;color:#8b8b8b;">Invertir de frente a fondo</div>


<svg width="1280" height="684" viewBox="0 0 1280 684">
 <g fill="none" stroke="#e8101a" stroke-width="2.8">
  <rect x="143.4" y="4" width="52.2" height="22"/>
  <rect x="199.1" y="473.1" width="317.6" height="20.9"/>
  <rect x="522.3" y="523.3" width="320.8" height="20.2"/>
 </g>
 <g stroke="#e8101a" stroke-width="2.7" stroke-linecap="round">
  <line x1="102" y1="126.5" x2="139" y2="37"/>
  <line x1="140" y1="501.6" x2="172" y2="491.3"/>
  <line x1="142.5" y1="573.5" x2="510" y2="539.6"/>
 </g>
 <g fill="#e8101a">
  <polygon points="142.6,27.8 143,39 134.6,35.6"/>
  <polygon points="184,487.4 174.3,497 170.9,486.7"/>
  <polygon points="520.5,538.7 509.8,544.4 509,534.4"/>
 </g>
 <g fill="#e8262c" font-family="Liberation Sans" font-size="13.5">
  <text x="95.5" y="146.5" font-family="Liberation Serif" font-size="13">1</text>
  <text x="125" y="512.3" transform="translate(125 0) scale(0.9 1) translate(-125 0)">2</text>
  <text x="125" y="582.5" transform="translate(125 0) scale(0.9 1) translate(-125 0)">3</text>
 </g>
</svg>

</body></html>
